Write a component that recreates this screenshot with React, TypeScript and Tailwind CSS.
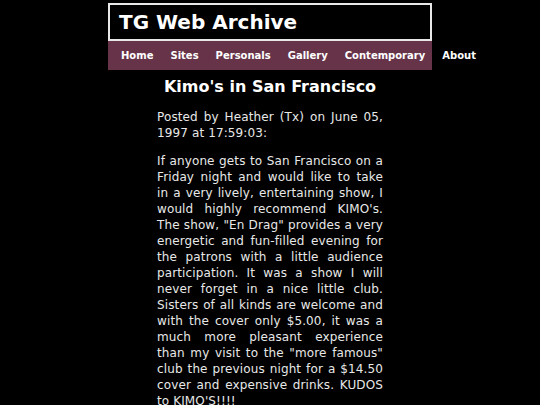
export default function App() {
  const nav = ["Home", "Sites", "Personals", "Gallery", "Contemporary", "About"];
  return (
    <div className="min-h-[405px] bg-black text-[#e8e8e8]" style={{ fontFamily: '"DejaVu Sans", Verdana, sans-serif' }}>
      <div className="mx-auto w-[324px] pt-[3px]">
        <div className="h-[38px] border-2 border-[#e8e8e8] bg-black pl-[9px] flex items-center">
          <h1 className="text-[20px] font-bold text-white leading-none">TG Web Archive</h1>
        </div>
        <nav className="h-[29px] bg-[#673349] flex items-center pl-[4.5px] pb-[1px] whitespace-nowrap">
          {nav.map((n) => (
            <a key={n} className="px-[8.5px] text-[10px] font-bold text-white shrink-0">
              {n}
            </a>
          ))}
        </nav>
      </div>
      <div className="mx-auto w-[226px]">
        <h2 className="mt-[7px] text-center text-[16px] font-bold text-white leading-[20px]">Kimo's in San Francisco</h2>
        <p className="mt-[12px] text-[12px] tracking-[0.12px] leading-[16px] text-justify">
          Posted by Heather (Tx) on June 05, 1997 at 17:59:03:
        </p>
        <p className="mt-[12px] text-[12px] tracking-[0.12px] leading-[16px] text-justify">
          If anyone gets to San Francisco on a Friday night and would like to take in a very lively, entertaining show, I would highly recommend KIMO's. The show, "En Drag" provides a very energetic and fun-filled evening for the patrons with a little audience participation. It was a show I will never forget in a nice little club. Sisters of all kinds are welcome and with the cover only $5.00, it was a much more pleasant experience than my visit to the "more famous" club the previous night for a $14.50 cover and expensive drinks. KUDOS to KIMO'S!!!!
        </p>
      </div>
    </div>
  );
}
